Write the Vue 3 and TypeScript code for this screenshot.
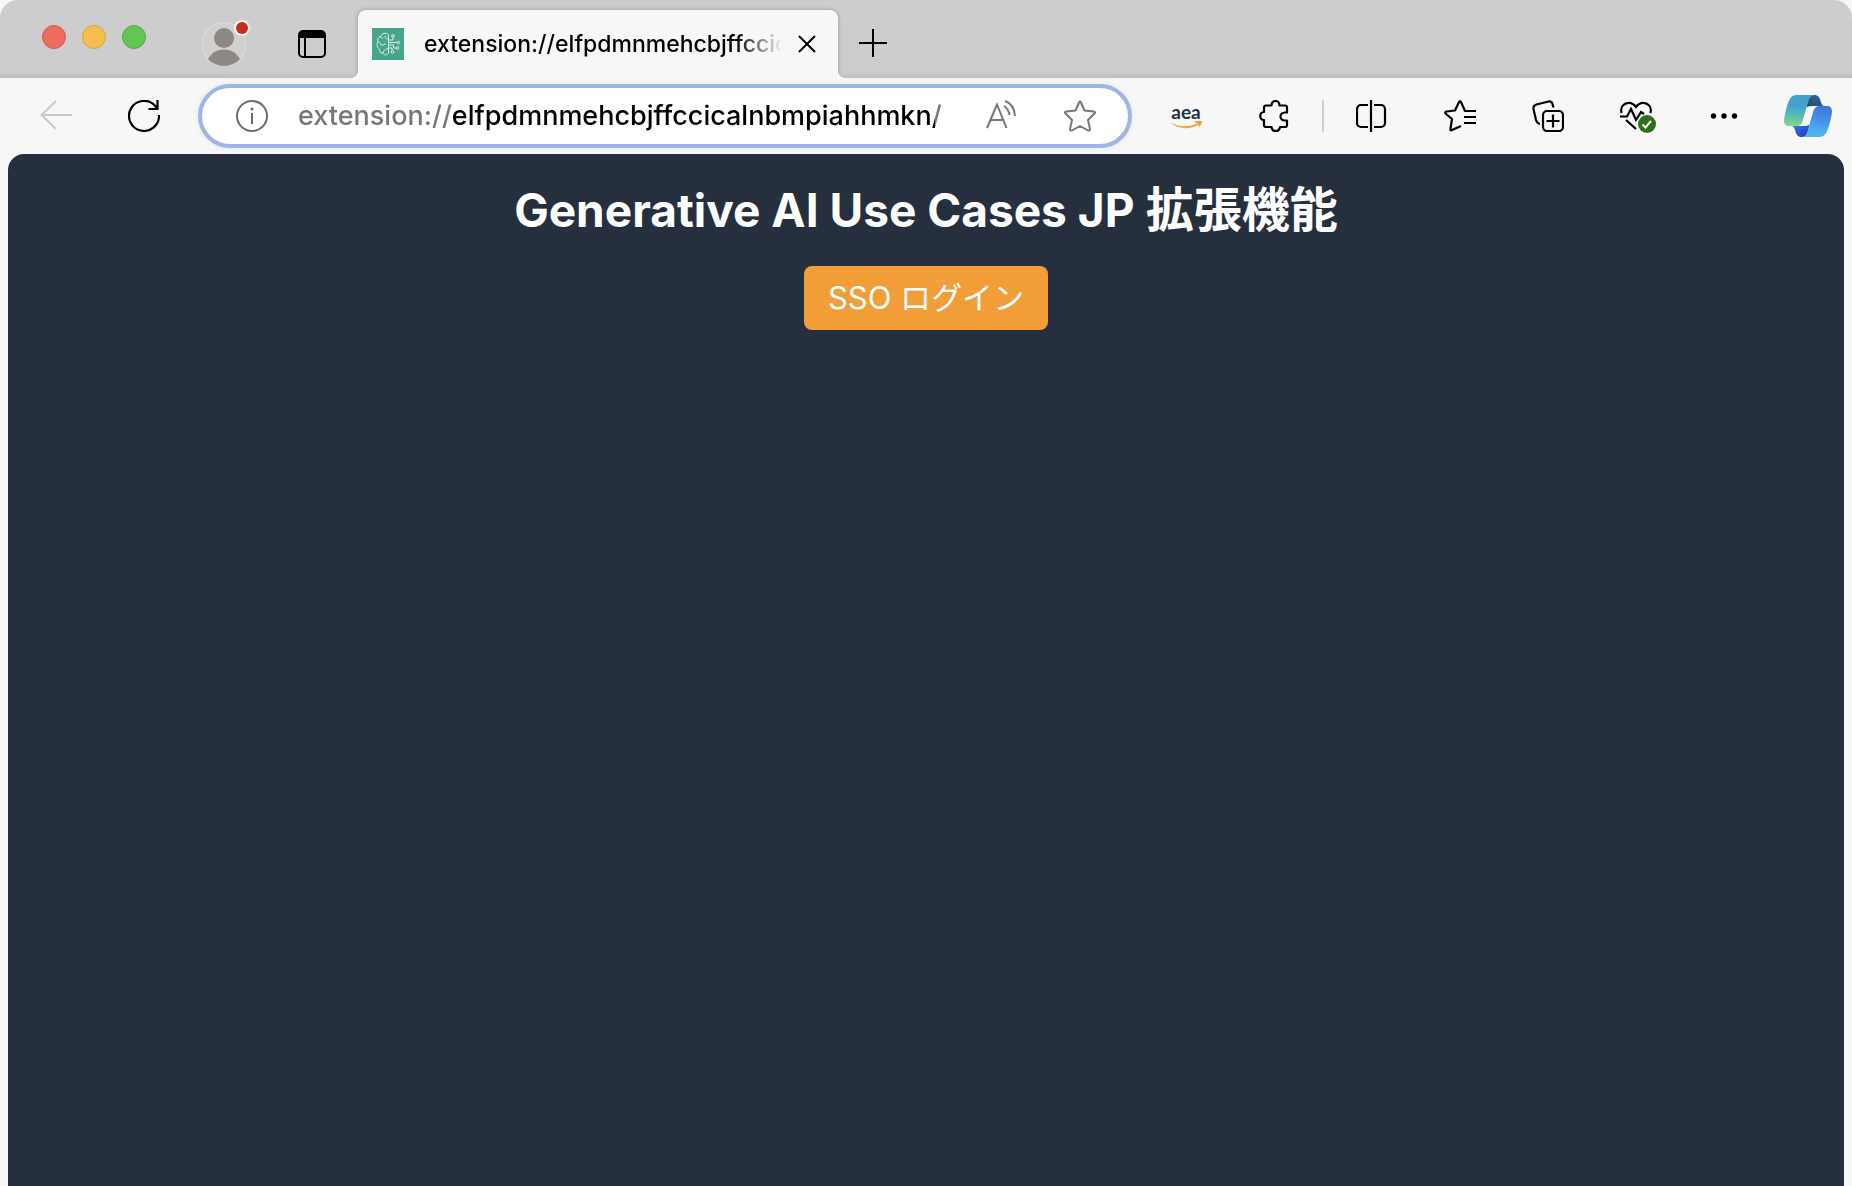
<script setup lang="ts">
import { ref } from 'vue'

const address = ref('extension://elfpdmnmehcbjffccicalnbmpiahhmkn/')
const tabTitle = 'extension://elfpdmnmehcbjffccicalnbmpiahhmkn/'
</script>

<template>
  <div class="window">
    <header class="tab-strip">
      <div class="lights">
        <button class="light red" aria-label="Close window"></button>
        <button class="light yellow" aria-label="Minimize window"></button>
        <button class="light green" aria-label="Zoom window"></button>
      </div>
      <button class="profile" aria-label="Profile">
        <svg width="52" height="52" viewBox="0 0 52 52">
          <defs><clipPath id="face"><circle cx="26" cy="26" r="22" /></clipPath></defs>
          <circle cx="26" cy="26" r="21.5" fill="#d2d0cc" stroke="#e2e0dd" />
          <g clip-path="url(#face)" fill="#8b8885">
            <circle cx="26" cy="20" r="10" />
            <ellipse cx="26" cy="49" rx="18" ry="17.500" />
          </g>
          <circle cx="44" cy="10" r="8" fill="#f7f7f7" />
          <circle cx="44" cy="10" r="6" fill="#cc2a1d" />
        </svg>
      </button>
      <button class="tab-actions" aria-label="Tab actions">
        <svg width="28" height="28" viewBox="0 0 28 28">
          <rect x="1" y="1" width="26" height="26" rx="4" fill="none" stroke="#000" stroke-width="2" />
          <path d="M1 8V5a4 4 0 0 1 4-4h18a4 4 0 0 1 4 4v3z" fill="#000" />
          <path d="M7 8v19" stroke="#000" stroke-width="2" />
        </svg>
      </button>
      <div class="tab">
        <svg class="favicon" width="32" height="32" viewBox="0 0 32 32" fill="none" stroke="#d6efe6" stroke-width="1">
          <path d="M0 0h32v32H0z" fill="#46a58c" stroke="none" />
          <path d="M16.500 7v18c-2 3-5 2-5.500 0-3 0-4-2-3.500-4-3-2-3-5-1.500-7-1-3 0-5 2.500-5 1-4 6-5 8-2zM6 14c2 0 3 1 3 3M8.500 9c1 0 2 1 2 2M16 11c-2 0-3-1-3-3M9 17h3l2-2M11 25c0-3 3-3 5-5M16.500 14.500h9M16.500 17h5v3h2.500M16.500 12h4.500V9M16.500 20h3.500v3" />
          <circle cx="21" cy="8" r="1.300" /><circle cx="26.500" cy="14.500" r="1.300" /><circle cx="25.500" cy="20" r="1.300" /><circle cx="20.500" cy="24" r="1.300" />
        </svg>
        <span class="tab-title">{{ tabTitle }}</span>
        <button class="tab-close" aria-label="Close tab">
          <svg width="20" height="20" viewBox="0 0 20 20"><path d="M2 2l16 16M18 2L2 18" stroke="#000" stroke-width="2" /></svg>
        </button>
      </div>
      <button class="new-tab" aria-label="New tab">
        <svg width="28" height="28" viewBox="0 0 28 28"><path d="M14 0v28M0 14h28" stroke="#000" stroke-width="2" /></svg>
      </button>
    </header>

    <nav class="toolbar">
      <button class="tool" aria-label="Back" disabled>
        <svg width="32" height="32" viewBox="0 0 32 32" fill="none" stroke="#cacaca" stroke-width="2"><path d="M32 15H1M16 1L1.500 15 16 29" /></svg>
      </button>
      <button class="tool" aria-label="Refresh">
        <svg width="32" height="32" viewBox="0 0 32 32" fill="none" stroke="#000" stroke-width="2.200"><path d="M31 15a15 15 0 1 1-4-9.300L29 8.500M29.500 0v9H20.500" /></svg>
      </button>
      <div class="address">
        <button class="in-field info" aria-label="Site information">
          <svg width="32" height="32" viewBox="0 0 32 32" fill="none" stroke="#6b6b6b" stroke-width="2"><circle cx="16" cy="16" r="15" /><path d="M16 13v11" /><circle cx="16" cy="9" r="1.500" fill="#6b6b6b" stroke="none" /></svg>
        </button>
        <input v-model="address" class="url" type="text" aria-label="Address" spellcheck="false" />
        <button class="in-field aloud" aria-label="Read aloud">
          <svg width="32" height="32" viewBox="0 0 32 32" fill="none" stroke="#767676" stroke-width="2"><path d="M1 28L11 4.500 20.500 28M4.500 20h13M18 6c3 2 5 5 5.500 9M19 1c6 2 9.500 8 10 15" /></svg>
        </button>
        <button class="in-field star" aria-label="Add to favorites">
          <svg width="32" height="32" viewBox="0 0 32 32" fill="none" stroke="#767676" stroke-width="2" stroke-linejoin="round"><path d="M15 2.500Q16 0.500 17 2.500L20.500 10.500 29.500 11.500Q32 12 30.500 13.500L24 20 26 29Q26 31 24 30.500L16 26 8 30.500Q6 31 6 29L8 20 1.500 13.500Q0 12 2.500 11.500L11.500 10.500Z" /></svg>
        </button>
      </div>
      <button class="tool aea" aria-label="aea extension">
        <span>aea</span>
        <svg width="32" height="8" viewBox="0 0 32 8"><path d="M0 1c8 5 19 6 28 1l-4-1c2-1.500 5-2 8-.800 0 2.500-1 4-3 6l-.500-2.800C20 9 8 8.500 0 1z" fill="#f3a03a" /></svg>
      </button>
      <button class="tool" aria-label="Extensions">
        <svg width="32" height="32" viewBox="-1 0 32 32" fill="none" stroke="#000" stroke-width="2.200" stroke-linejoin="round"><path d="M7 5.500h5.500C12.500-.500 20.500-.500 20.500 5.500H26a2 2 0 0 1 2 2v5h-2c-6 0-6 8 0 8h2V25a2 2 0 0 1-2 2h-5c-1 5.500-7.500 5.500-8.500 0H7a2 2 0 0 1-2-2v-5C0 20 0 12 5 12V7.500a2 2 0 0 1 2-2z" /></svg>
      </button>
      <span class="divider"></span>
      <button class="tool" aria-label="Split screen">
        <svg width="32" height="32" viewBox="1 0 32 32" fill="none" stroke="#000" stroke-width="2.200"><path d="M16 0v32M13 5H6a4 4 0 0 0-4 4v14a4 4 0 0 0 4 4h7M19 5h7a4 4 0 0 1 4 4v14a4 4 0 0 1-4 4h-7" /></svg>
      </button>
      <button class="tool" aria-label="Favorites">
        <svg width="32" height="32" viewBox="0 0 32 32" fill="none" stroke="#000" stroke-width="2.200" stroke-linejoin="round"><path d="M17 26L8 30Q6 31 6.500 28.500L8 19 1.500 13.500Q0.500 12 2.500 11.500L11 10.500 15 2Q16 0.500 17 2L21 11H32M20 17h12M20 23h12" /></svg>
      </button>
      <button class="tool" aria-label="Collections">
        <svg width="32" height="32" viewBox="0 0 32 32" fill="none" stroke="#000" stroke-width="2.200" stroke-linejoin="round"><path d="M21.500 7.500L20.500 4Q19.500 1 16.500 1.500L4.500 4.500Q1 5.500 1.500 9L4 20Q5 23.500 8 24" /><rect x="11" y="11" width="20" height="20" rx="4" /><path d="M21 14.500v13M14.500 21h13" /></svg>
      </button>
      <button class="tool" aria-label="Browser essentials">
        <svg width="40" height="36" viewBox="-4 -2 40 36" fill="none" stroke="#000" stroke-width="2.200"><path d="M1.500 13C-1 4 10-1 16 7 22-1 33 4 30.500 13M0 16.500h7L11 9l5 11 5-8 3 2M6 20l10 9" /><circle cx="27" cy="24" r="9" fill="#2f6f1e" stroke="none" /><path d="M22.500 24.500l3 3L31 21" stroke="#fff" stroke-width="2" /></svg>
      </button>
      <button class="tool" aria-label="Settings and more">
        <svg width="28" height="8" viewBox="0 0 28 8"><circle cx="3.500" cy="4" r="2.700" /><circle cx="14" cy="4" r="2.700" /><circle cx="24.500" cy="4" r="2.700" /></svg>
      </button>
      <button class="tool copilot" aria-label="Copilot">
        <svg width="48" height="42" viewBox="0 0 144 126">
          <defs>
            <linearGradient id="teal" x1=".5" y1="0" x2=".4" y2="1"><stop offset="0" stop-color="#42a3bf" /><stop offset=".35" stop-color="#41a0d2" /><stop offset=".65" stop-color="#56bcb2" /><stop offset="1" stop-color="#82d68e" /></linearGradient>
            <linearGradient id="blue" x1=".6" y1="0" x2=".4" y2="1"><stop offset="0" stop-color="#3d78d8" /><stop offset=".4" stop-color="#438ee9" /><stop offset=".75" stop-color="#4faaf5" /><stop offset="1" stop-color="#56b8dc" /></linearGradient>
            <linearGradient id="navy" x1="0" y1="1" x2="1" y2="0"><stop offset="0" stop-color="#25486d" /><stop offset="1" stop-color="#326e9a" /></linearGradient>
            <linearGradient id="royal" x1="0" y1="0" x2="1" y2="1"><stop offset="0" stop-color="#3b7ce8" /><stop offset="1" stop-color="#1e35c5" /></linearGradient>
          </defs>
          <path d="M68 36C72 12 76 0 90 0c14 0 17 8 20 18 2 9 5 15 14 15H92c-12 0-18 0-24 3z" fill="url(#navy)" />
          <path d="M76 90C72 114 68 126 54 126c-14 0-17-8-20-18-2-9-5-15-14-15h32c12 0 18 0 24-3z" fill="url(#royal)" />
          <path d="M36 0H90C80 0 76 8 72 22L57 74C53 87 48 93 36 93H16C2 93-2 84 1 68 5 45 12 20 20 8Q26 0 36 0z" fill="url(#teal)" />
          <path d="M108 126H54c10 0 14-8 18-22L87 52c4-13 9-19 21-19h20c14 0 18 9 15 25-4 23-11 48-19 60q-6 8-16 8z" fill="url(#blue)" />
        </svg>
      </button>
    </nav>

    <main class="page">
      <h1><span class="latin">Generative AI Use Cases JP</span> 拡張機能</h1>
      <button class="login">SSO ログイン</button>
    </main>
  </div>
</template>

<style>
body {
  margin: 0;
  background: #f7f7f7;
}
</style>

<style scoped>
.window {
  display: flex;
  flex-direction: column;
  min-height: 100vh;
  background: #f7f7f7;
  font-family: Inter, "Noto Sans CJK JP", sans-serif;
}
button {
  display: flex;
  align-items: center;
  justify-content: center;
  padding: 0;
  border: 0;
  background: none;
  font-family: inherit;
  flex-shrink: 0;
}
svg {
  display: block;
  flex-shrink: 0;
}
.tab-strip {
  display: flex;
  align-items: flex-start;
  height: 78px;
  border-top-left-radius: 18px;
  border-top-right-radius: 18px;
  background: linear-gradient(#cdcdcd 72px, #bdbdbd 78px);
}
.lights {
  display: flex;
  gap: 16px;
  padding: 25px 0 0 42px;
}
.light {
  width: 24px;
  height: 24px;
  border-radius: 50%;
  border: 1px solid;
}
.red { background: #ed6b5f; border-color: #d55b50; }
.yellow { background: #f6be50; border-color: #d8a443; }
.green { background: #62c655; border-color: #52a945; }
.profile {
  margin: 18px 0 0 52px;
}
.tab-actions {
  margin: 30px 0 0 48px;
}
.tab {
  position: relative;
  display: flex;
  align-items: center;
  width: 480px;
  height: 68px;
  margin: 10px 0 0 32px;
  border-radius: 8px 8px 0 0;
  background: #f7f7f7;
  box-shadow: 0 0 4px #0000004d;
  clip-path: inset(-8px -8px 0 -8px);
}
.tab::before,
.tab::after {
  content: "";
  position: absolute;
  bottom: 0;
  width: 8px;
  height: 8px;
}
.tab::before {
  right: 100%;
  background: radial-gradient(circle at 0 0, transparent 8px, #f7f7f7 8px);
}
.tab::after {
  left: 100%;
  background: radial-gradient(circle at 100% 0, transparent 8px, #f7f7f7 8px);
}
.favicon {
  margin-left: 14px;
}
.tab-title {
  width: 358px;
  margin-left: 20px;
  overflow: hidden;
  white-space: nowrap;
  font-size: 23px;
  font-weight: 500;
  line-height: 32px;
  color: #000;
  mask-image: linear-gradient(to right, #000 312px, transparent 358px);
}
.tab-close {
  margin-left: 15px;
}
.new-tab {
  margin: 29px 0 0 21px;
}
.toolbar {
  display: flex;
  align-items: center;
  height: 76px;
  padding: 0 4px 0 12px;
}
.tool {
  width: 88px;
  height: 64px;
}
.address {
  display: flex;
  align-items: center;
  flex: 1;
  min-width: 0;
  height: 64px;
  box-sizing: border-box;
  margin: 0 10px;
  border: 4px solid #a0b4e8;
  border-radius: 32px;
  background: #fff;
  box-shadow: 0 0 6px #00000012;
}
.info {
  margin: 0 30px 0 34px;
}
.url {
  flex: 1;
  min-width: 0;
  height: 40px;
  padding: 0;
  border: 0;
  outline: 0;
  font-family: inherit;
  font-size: 27px;
  font-weight: 500;
  line-height: 40px;
  color: transparent;
  background: linear-gradient(to right, #767676 153px, #000 153px, #000 637px, #767676 637px);
  background-clip: text;
}
.aloud {
  margin: 0 46px 0 16px;
}
.star {
  margin-right: 32px;
}
.aea {
  flex-direction: column;
  font-family: Lato, sans-serif;
  font-size: 19px;
  font-weight: 700;
  line-height: 18px;
  color: #252f3e;
}
.divider {
  width: 2px;
  height: 32px;
  margin: 0 4px;
  background: #cfcfcf;
}
.copilot {
  width: 80px;
}
.page {
  flex: 1;
  display: flex;
  flex-direction: column;
  align-items: center;
  margin: 0 8px;
  padding-top: 26px;
  border-radius: 16px 16px 0 0;
  background: #262f3e;
}
h1 {
  margin: 0 0 26px;
  font-size: 48px;
  line-height: 60px;
  font-weight: 700;
  color: #fff;
}
.latin {
  font-size: 46px;
}
.login {
  height: 64px;
  padding: 0 24px;
  border-radius: 8px;
  background: #f19e39;
  color: #fff;
  font-size: 31px;
  line-height: 48px;
}
</style>
